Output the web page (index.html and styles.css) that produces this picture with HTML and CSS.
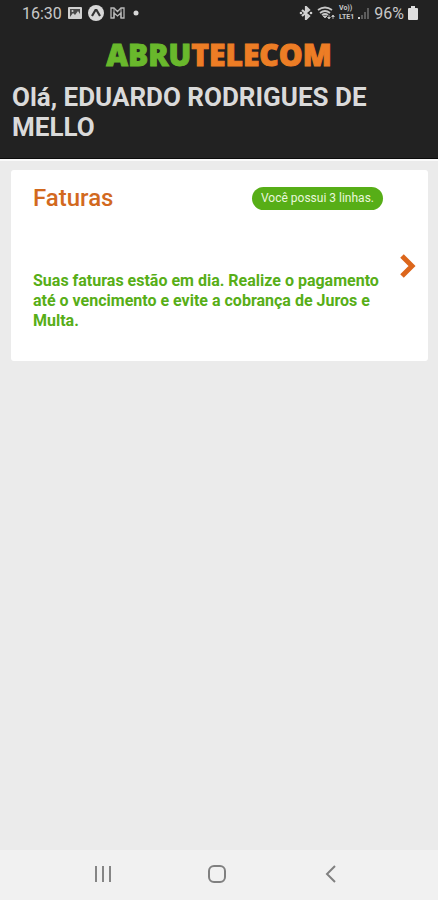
FILE: index.html
```html
<!DOCTYPE html>
<html lang="pt-BR">
<head>
    <meta charset="UTF-8">
    <meta name="viewport" content="width=device-width, initial-scale=1.0">
    <title>Abrutelecom</title>
    <link rel="stylesheet" href="styles.css">
</head>
<body>
    <header class="header">
        <div class="status-bar">
            <div class="status-left">
                <span>16:30</span>
                <svg width="14" height="14" viewBox="0 0 14 14">
                    <rect x="0" y="1" width="14" height="12" rx="1" fill="#d0d0d0"/>
                    <rect x="2" y="3" width="10" height="8" fill="#4a4a4a"/>
                    <path d="M2 11L5 7l2 2 3-4 2 3v3z" fill="#d0d0d0"/>
                    <circle cx="4.500" cy="5" r="1" fill="#d0d0d0"/>
                </svg>
                <svg width="16" height="16" viewBox="0 0 16 16">
                    <circle cx="8" cy="8" r="8" fill="#d8d8d8"/>
                    <path d="M4 11L7.500 5h1L12 11" fill="none" stroke="#333" stroke-width="2.200"/>
                </svg>
                <svg width="15" height="12" viewBox="0 0 15 12">
                    <path d="M1 1h3l3.500 3.500L11 1h3v10h-3V6L7.500 9 4 6v5H1z" fill="none" stroke="#b8b8b8" stroke-width="1.300"/>
                    <path d="M4 1v10M11 1v10" stroke="#b8b8b8"/>
                </svg>
                <svg class="dot" width="6" height="6" viewBox="0 0 6 6">
                    <circle cx="3" cy="3" r="2.500" fill="#d8d8d8"/>
                </svg>
            </div>
            <div class="status-right">
                <svg width="14" height="14" viewBox="0 0 14 14">
                    <path d="M3 4l7 6-3 3V1l3 3-7 6" fill="none" stroke="#d0d0d0" stroke-width="2.200"/>
                    <circle cx="2" cy="7" r="1.300" fill="#d0d0d0"/>
                    <circle cx="12" cy="7" r="1.300" fill="#d0d0d0"/>
                </svg>
                <svg width="18" height="14" viewBox="0 0 18 14">
                    <path d="M1 4Q8-1 15 4M3 7q5-4 10 0M5 9q3-2 6 0" fill="none" stroke="#c8c8c8" stroke-width="1.800"/>
                    <path d="M6 10h4l-2 2zM12 9v4M10.500 11l1.500 2 1.500-2M16 13V9M14.500 11L16 9l1.500 2" fill="#c8c8c8" stroke="#c8c8c8" stroke-width=".8"/>
                </svg>
                <div class="volte"><span>Vo))</span><span>LTE1</span></div>
                <svg width="12" height="12" viewBox="0 0 12 12">
                    <path d="M0 10h2v2H0z" fill="#d0d0d0"/>
                    <path d="M3 8h2v4H3zM6 5h2v7H6zM9 1h2v11H9z" fill="#5c5c5c"/>
                </svg>
                <span class="percent">96%</span>
                <svg width="10" height="14" viewBox="0 0 10 14">
                    <path d="M3 0h4v2h2q1 0 1 1v10q0 1-1 1H1q-1 0-1-1V3q0-1 1-1h2z" fill="#dedede"/>
                </svg>
            </div>
        </div>
        <div class="logo"><span class="logo-green">ABRU</span><span class="logo-orange">TELECOM</span></div>
        <h1>Olá, EDUARDO RODRIGUES DE MELLO</h1>
    </header>

    <main class="content">
        <a class="card" href="#">
            <div class="card-body">
                <div class="card-top">
                    <h2>Faturas</h2>
                    <span class="badge">Você possui 3 linhas.</span>
                </div>
                <p>Suas faturas estão em dia. Realize o pagamento até o vencimento e evite a cobrança de Juros e Multa.</p>
            </div>
            <svg class="chevron" width="16" height="24" viewBox="0 0 16 24">
                <path d="M2 2l10 10L2 22" fill="none" stroke="#dc661b" stroke-width="5"/>
            </svg>
        </a>
    </main>

    <nav class="nav-bar">
        <button type="button" aria-label="Recentes">
            <svg width="20" height="20" viewBox="0 0 20 20">
                <path d="M3 2v16M10 2v16M17 2v16" stroke="#858585" stroke-width="2"/>
            </svg>
        </button>
        <button type="button" aria-label="Início">
            <svg width="20" height="20" viewBox="0 0 20 20">
                <rect x="2" y="2" width="16" height="16" rx="5" fill="none" stroke="#808080" stroke-width="2"/>
            </svg>
        </button>
        <button type="button" aria-label="Voltar">
            <svg width="20" height="20" viewBox="0 0 20 20">
                <path d="M14 2L6 10l8 8" fill="none" stroke="#808080" stroke-width="2"/>
            </svg>
        </button>
    </nav>
</body>
</html>
```

FILE: styles.css
```css
* {
    box-sizing: border-box;
}

body {
    margin: 0;
    min-height: 100vh;
    display: flex;
    flex-direction: column;
    background-color: #ebebeb;
    font-family: Roboto, "Liberation Sans", sans-serif;
}

.header {
    background-color: #222;
    border-bottom: 1px solid #0c0c0c;
    box-shadow: 0 2px 0 #fafafa;
    padding-bottom: 16px;
}

.status-bar {
    height: 26px;
    padding: 0 20px 0 22px;
    display: flex;
    align-items: center;
    justify-content: space-between;
    color: #c8c8c8;
    font-size: 16px;
}

.status-left {
    display: flex;
    align-items: center;
    gap: 6px;
}

.dot {
    margin-left: 2px;
}

.status-right {
    display: flex;
    align-items: center;
    gap: 4px;
}

.volte {
    display: flex;
    flex-direction: column;
    font-size: 7px;
    font-weight: bold;
    line-height: 9px;
}

.logo {
    height: 56px;
    line-height: 58px;
    text-align: center;
    font-family: "Open Sans", "Liberation Sans", sans-serif;
    font-size: 30px;
    font-weight: 800;
    -webkit-text-stroke: 1px;
}

.logo-green {
    color: #69b82c;
}

.logo-orange {
    color: #ed7d25;
}

h1 {
    margin: 0;
    padding: 0 12px;
    font-size: 26px;
    line-height: 30px;
    color: #dadada;
}

.content {
    flex: 1;
    padding: 11px 10px 11px 11px;
}

.card {
    display: flex;
    align-items: center;
    min-height: 191px;
    padding: 12px 12px 12px 22px;
    background-color: #fff;
    border-radius: 3px;
    text-decoration: none;
}

.card-body {
    flex: 1;
    align-self: flex-start;
}

.card-top {
    display: flex;
    align-items: center;
    justify-content: space-between;
    padding-right: 17px;
    margin-bottom: 57px;
}

.card p {
    margin: 0;
    padding-right: 10px;
    color: #57ae17;
    font-size: 16px;
    font-weight: bold;
    line-height: 20px;
}

h2 {
    margin: 0;
    font-size: 24px;
    line-height: 32px;
    font-weight: 500;
    color: #d2691e;
}

.badge {
    padding: 0 9px;
    border-radius: 12px;
    background-color: #57ae17;
    color: #e9f7dc;
    font-size: 12px;
    line-height: 23px;
}

.nav-bar {
    height: 50px;
    padding-right: 4px;
    display: flex;
    justify-content: center;
    align-items: center;
    gap: 74px;
    background-color: #f1f1f1;
}

.nav-bar button {
    width: 40px;
    height: 40px;
    padding: 0;
    border: none;
    background: none;
    cursor: pointer;
}
```
